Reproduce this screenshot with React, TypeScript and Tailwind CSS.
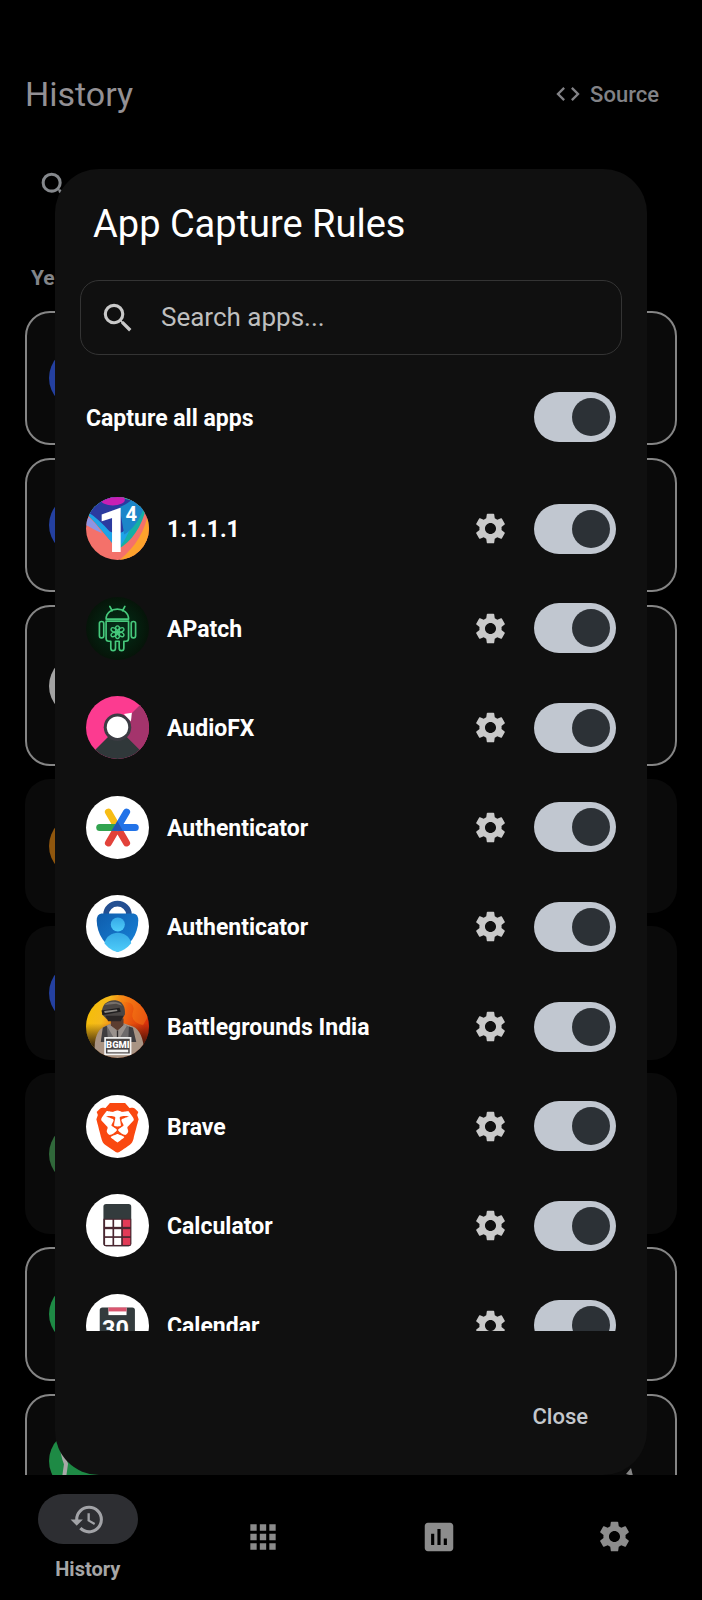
import { useState } from "react";
import type { ReactNode } from "react";
import { MdApps, MdAssessment, MdCode, MdHistory, MdSearch, MdSettings } from "react-icons/md";
import { SiBrave } from "react-icons/si";

// All app icons share a 188 unit square with a round mask
function AppIcon({ id, children }: { id: string; children: ReactNode }) {
  return (
    <svg viewBox="0 0 188 188" className="size-[63px] shrink-0" aria-hidden="true">
      <clipPath id={`${id}-clip`}>
        <circle cx="94" cy="94" r="94" />
      </clipPath>
      <g clipPath={`url(#${id}-clip)`}>{children}</g>
    </svg>
  );
}

function OneIcon() {
  return (
    <AppIcon id="one">
      <rect width="188" height="188" fill="#f4716a" />
      <path d="M188 36C178 100 148 150 100 188H188Z" fill="#fda22c" />
      <path d="M0 48C30 78 60 116 94 156C138 134 168 84 180 30L150 0H0Z" fill="#16b0a4" />
      <path d="M0 48C30 78 60 116 94 156C120 130 140 86 150 20L94 0H0Z" fill="#1ea3e6" />
      <path d="M0 56C20 68 34 84 48 108L30 100C16 92 8 86 0 84Z" fill="#8d95e4" />
      <path d="M4 44C30 60 50 80 70 102C82 110 106 110 114 100C134 76 146 50 150 14L94 0H30Z" fill="#2b3a9f" />
      <path d="M100 30C116 24 134 14 142 0L172 34C158 70 140 96 114 112Z" fill="#1b86c9" />
      <ellipse cx="80" cy="8" rx="36" ry="17" fill="#c81fb4" />
      <text x="32" y="165" fontFamily="Roboto" fontWeight="700" fontSize="182" fill="#fff">1</text>
      <text x="118" y="72" fontFamily="Roboto" fontWeight="700" fontSize="60" fill="#fff">4</text>
    </AppIcon>
  );
}

function APatchIcon() {
  return (
    <AppIcon id="apatch">
      <radialGradient id="apatch-bg">
        <stop offset="0" stopColor="#06301a" />
        <stop offset="0.6" stopColor="#04200f" />
        <stop offset="1" stopColor="#061409" />
      </radialGradient>
      <rect width="188" height="188" fill="url(#apatch-bg)" />
      <g fill="none" stroke="#46c97c" strokeWidth="5" strokeLinecap="round" strokeLinejoin="round">
        <path d="M60 66C60 26 127 26 127 66Z" />
        <path d="M71 28L78 41M116 28L109 41" />
        <path d="M60 72H127V124Q127 132 119 132H113V152Q113 160 106 160Q99 160 99 152V132H88V152Q88 160 81 160Q74 160 74 152V132H68Q60 132 60 124Z" />
        <rect x="40" y="73" width="13" height="49" rx="6" />
        <rect x="135" y="73" width="13" height="49" rx="6" />
        <g strokeWidth="4">
          <ellipse cx="94" cy="95" rx="6" ry="9" />
          <ellipse cx="94" cy="115" rx="6" ry="9" />
          <ellipse cx="84" cy="99" rx="6" ry="10" transform="rotate(-60 84 99)" />
          <ellipse cx="104" cy="99" rx="6" ry="10" transform="rotate(60 104 99)" />
          <ellipse cx="84" cy="111" rx="6" ry="10" transform="rotate(60 84 111)" />
          <ellipse cx="104" cy="111" rx="6" ry="10" transform="rotate(-60 104 111)" />
        </g>
      </g>
    </AppIcon>
  );
}

function AudioFxIcon() {
  return (
    <AppIcon id="audiofx">
      <rect width="188" height="188" fill="#fc3b90" />
      <path d="M94 94L188 0V188Z" fill="#a4346c" />
      <path d="M94 94L188 188H0Z" fill="#30383a" />
      <circle cx="94" cy="93" r="41" fill="#3b3c43" />
      <path d="M113 54L137 50L134 76Z" fill="#fff" />
      <circle cx="94" cy="93" r="32" fill="#fff" />
    </AppIcon>
  );
}

function GoogleAuthIcon() {
  return (
    <AppIcon id="gauth">
      <rect width="188" height="188" fill="#fff" />
      <g strokeWidth="21" strokeLinecap="round">
        <path d="M94 94L67 140M94 94L121 140" stroke="#e2423a" />
        <path d="M94 94L67 48" stroke="#f7bd15" />
        <path d="M94 94H41" stroke="#32a350" />
        <path d="M94 94H147M94 94L121 48" stroke="#2273e8" />
      </g>
      <path d="M76 104L94 75L110 104Z" fill="#2356b4" />
    </AppIcon>
  );
}

function MsAuthIcon() {
  return (
    <AppIcon id="msauth">
      <linearGradient id="msauth-body" x2="1" y2="1">
        <stop offset="0" stopColor="#0f5cab" />
        <stop offset="1" stopColor="#1785dc" />
      </linearGradient>
      <linearGradient id="msauth-user" x2="0" y2="1">
        <stop offset="0" stopColor="#35a9e6" />
        <stop offset="1" stopColor="#4fcdfa" />
      </linearGradient>
      <rect width="188" height="188" fill="#fff" />
      <path d="M60 64V58A34 32 0 0 1 128 58V64" fill="none" stroke="#234f91" strokeWidth="17" />
      <path d="M46 55H142Q156 57 156 76C156 116 130 154 94 170C58 154 32 116 32 76Q32 57 46 55Z" fill="url(#msauth-body)" />
      <circle cx="95" cy="88" r="21" fill="url(#msauth-user)" />
      <path d="M55 144C64 102 126 102 135 144C122 160 108 168 95 170C80 168 66 158 55 144Z" fill="url(#msauth-user)" />
    </AppIcon>
  );
}

function BgmiIcon() {
  return (
    <AppIcon id="bgmi">
      <linearGradient id="bgmi-bg" x2="1" y2="0.35">
        <stop offset="0" stopColor="#f6c000" />
        <stop offset="0.35" stopColor="#f5b91c" />
        <stop offset="0.65" stopColor="#f1640f" />
        <stop offset="1" stopColor="#d8300b" />
      </linearGradient>
      <linearGradient id="bgmi-shade" x2="0" y2="1">
        <stop offset="0.45" stopColor="#1a0a04" stopOpacity="0" />
        <stop offset="0.85" stopColor="#1a0f0a" stopOpacity="0.95" />
      </linearGradient>
      <rect width="188" height="188" fill="url(#bgmi-bg)" />
      <path d="M110 20Q150 20 140 50T170 90L188 60V0H100Z" fill="#f98a1a" opacity="0.4" />
      <rect width="188" height="188" fill="url(#bgmi-shade)" />
      <path d="M26 170C24 130 34 104 52 96L76 84H112L140 94C160 102 172 130 174 170L140 188H60Z" fill="#a99484" />
      <path d="M74 70H112V92L94 106L74 92Z" fill="#5c3d30" />
      <path d="M52 96L70 88L94 108L114 88L136 98L142 140H46Z" fill="#6d6a6b" />
      <path d="M70 88L94 108L114 88L122 92L100 130H84L62 92Z" fill="#99918d" />
      <path d="M50 98L62 92L66 140H44ZM128 94L140 98L150 140H126Z" fill="#3f3d40" />
      <path d="M94 106V130" stroke="#2c292b" strokeWidth="4" />
      <path d="M20 160L60 188H130L176 150V188H20Z" fill="#1c1818" />
      <path d="M48 58C44 28 66 14 88 16C108 18 118 34 116 58L108 72H62Z" fill="#4b4644" />
      <path d="M56 30C66 18 98 16 108 32L90 26Z" fill="#77706b" />
      <path d="M46 46L100 38L104 50L50 60Z" fill="#1f1d1e" />
      <path d="M54 48L92 43L94 48L56 54Z" fill="#8b8782" />
      <path d="M58 62H112L104 78H66Z" fill="#2b2626" />
      <rect x="57" y="128" width="76" height="49" fill="#4a4646" stroke="#f4f4f4" strokeWidth="5" />
      <text x="95" y="158" textAnchor="middle" fontFamily="Roboto" fontWeight="900" fontSize="28" fill="#fff">BGMI</text>
      <rect x="64" y="163" width="62" height="8" fill="#f4f4f4" />
    </AppIcon>
  );
}

function BraveIcon() {
  return (
    <AppIcon id="brave">
      <rect width="188" height="188" fill="#fff" />
      <SiBrave x="20" y="24" size={148} color="#fa4810" />
    </AppIcon>
  );
}

function CalculatorIcon() {
  return (
    <AppIcon id="calculator">
      <rect width="188" height="188" fill="#fff" />
      <rect x="52" y="30" width="83" height="126" rx="8" fill="#333b3d" />
      <path d="M52 74H135V148Q135 156 127 156H60Q52 156 52 148Z" fill="#4a2630" />
      {[77, 105, 131].map((y) => (
        <g key={y}>
          <rect x="57" y={y} width="22" height="21" fill="#fff" />
          <rect x="84" y={y} width="21" height="21" fill="#fff" />
          <rect x="110" y={y} width="22" height="21" fill="#e23a57" />
        </g>
      ))}
    </AppIcon>
  );
}

function CalendarIcon() {
  return (
    <AppIcon id="calendar">
      <rect width="188" height="188" fill="#fff" />
      <rect x="41" y="40" width="105" height="110" rx="8" fill="#333b3d" />
      <rect x="67" y="40" width="54" height="23" fill="#fff" />
      <rect x="67" y="40" width="54" height="12" fill="#d9566f" />
      <text x="88" y="127" textAnchor="middle" fontFamily="Roboto" fontWeight="700" fontSize="70" fill="#fff">30</text>
    </AppIcon>
  );
}

const apps = [
  { id: "one", name: "1.1.1.1", Icon: OneIcon },
  { id: "apatch", name: "APatch", Icon: APatchIcon },
  { id: "audiofx", name: "AudioFX", Icon: AudioFxIcon },
  { id: "gauth", name: "Authenticator", Icon: GoogleAuthIcon },
  { id: "msauth", name: "Authenticator", Icon: MsAuthIcon },
  { id: "bgmi", name: "Battlegrounds India", Icon: BgmiIcon },
  { id: "brave", name: "Brave", Icon: BraveIcon },
  { id: "calculator", name: "Calculator", Icon: CalculatorIcon },
  { id: "calendar", name: "Calendar", Icon: CalendarIcon },
];

const outlined = "border-2 border-[#858585]";
const plain = "border-2 border-transparent";
const historyCards = [
  { size: "h-[134px]", frame: outlined, dot: "bg-[#2440a0]" },
  { size: "h-[134px]", frame: outlined, dot: "bg-[#2440a0]" },
  { size: "h-[161px]", frame: outlined, dot: "bg-[#a3a3a3]" },
  { size: "h-[134px]", frame: plain, dot: "bg-[#8f560d]" },
  { size: "h-[134px]", frame: plain, dot: "bg-[#2440a0]" },
  { size: "h-[161px]", frame: plain, dot: "bg-[#30683a]" },
  { size: "h-[134px]", frame: outlined, dot: "bg-[#1e8a45]" },
];

function Toggle({ id, checked, onChange }: { id: string; checked: boolean; onChange: () => void }) {
  return (
    <input
      id={id}
      type="checkbox"
      role="switch"
      checked={checked}
      onChange={onChange}
      className="flex h-[50px] w-[82px] shrink-0 cursor-pointer appearance-none items-center rounded-full bg-[#44474c] px-[6px] transition-colors before:size-[38px] before:rounded-full before:bg-[#8d9198] checked:justify-end checked:bg-[#c1c7d0] checked:before:bg-[#2c3136]"
    />
  );
}

function HistoryPage() {
  return (
    <main className="flex min-h-0 flex-1 flex-col overflow-hidden px-[25px] pt-[69px]">
      <header className="flex h-[50px] items-center justify-between pr-[18px]">
        <h1 className="text-[34px] text-[#939094]">History</h1>
        <a href="#source" className="flex items-center gap-2 text-[22px] font-medium text-[#828286]">
          <MdCode size={28} />
          Source
        </a>
      </header>
      <div className="mt-[48px] flex h-[38px] shrink-0 items-center px-3 text-[#85888c]">
        <MdSearch size={37} />
      </div>
      <h2 className="mt-[58px] px-[6px] text-[21px] leading-[30px] font-bold text-[#828589]">Yesterday</h2>
      <div className="mt-[18px] flex flex-col gap-[13px]">
        {historyCards.map((card, i) => (
          <div key={i} className={`flex shrink-0 items-center rounded-[25px] bg-[#0a0a0a] px-[22px] ${card.size} ${card.frame}`}>
            <span className={`size-[62px] rounded-full ${card.dot}`} />
          </div>
        ))}
        <div className={`flex h-[134px] shrink-0 items-center justify-between rounded-[25px] bg-[#0a0a0a] px-[22px] ${outlined}`}>
          <svg viewBox="0 0 62 62" className="size-[62px]" aria-hidden="true">
            <circle cx="31" cy="31" r="31" fill="#1e8a45" />
            <path d="M13 14Q13 24 17 34L15 48" fill="none" stroke="#a8a8a8" strokeWidth="4" />
          </svg>
          <svg viewBox="0 0 24 24" className="mr-4 mb-[46px] size-3 self-end" aria-hidden="true">
            <path d="M2 12L12 0L18 24L12 15Z" fill="#858585" />
          </svg>
        </div>
      </div>
    </main>
  );
}

function BottomNav() {
  return (
    <nav className="grid h-[125px] shrink-0 grid-cols-4 bg-black text-[#8c8c8c]">
      <button className="flex flex-col items-center pt-[19px]">
        <span className="flex h-[50px] w-[100px] items-center justify-center rounded-full bg-[#2d2e32] text-[#a2a3a7]">
          <MdHistory size={37} />
        </span>
        <span className="mt-[10px] text-[20px] leading-[30px] font-bold text-[#a6a6a6]">History</span>
      </button>
      <button aria-label="Apps" className="flex items-center justify-center pb-0.5">
        <MdApps size={38} />
      </button>
      <button aria-label="Statistics" className="flex items-center justify-center pb-0.5">
        <MdAssessment size={38} />
      </button>
      <button aria-label="Settings" className="flex items-center justify-center pb-0.5">
        <MdSettings size={37} />
      </button>
    </nav>
  );
}

function CaptureRulesDialog() {
  const [captureAll, setCaptureAll] = useState(true);
  const [disabled, setDisabled] = useState<string[]>([]);
  const [query, setQuery] = useState("");

  const toggleApp = (id: string) =>
    setDisabled((prev) => (prev.includes(id) ? prev.filter((x) => x !== id) : [...prev, id]));

  const visible = apps.filter((app) => app.name.toLowerCase().includes(query.toLowerCase()));

  return (
    <div
      role="dialog"
      aria-labelledby="rules-title"
      className="absolute inset-x-[55px] top-[169px] bottom-[125px] flex flex-col rounded-[44px] bg-[#101010] px-[25px]"
    >
      <h2 id="rules-title" className="px-[13px] pt-[30px] text-[38px] leading-[50px] text-white">
        App Capture Rules
      </h2>
      <label className="mt-[31px] flex h-[75px] shrink-0 items-center gap-6 rounded-[19px] border border-[#343434] px-[18px] text-[#c9c9c9]">
        <MdSearch size={38} className="shrink-0" />
        <input
          type="text"
          aria-label="Search apps"
          placeholder="Search apps..."
          value={query}
          onChange={(e) => setQuery(e.target.value)}
          className="min-w-0 flex-1 bg-transparent text-[26px] outline-none placeholder:text-[#bfbfbf]"
        />
      </label>
      <div className="mt-[37px] flex items-center justify-between px-[6px]">
        <label htmlFor="capture-all" className="pt-[3px] text-[23px] leading-[34px] font-bold text-white">
          Capture all apps
        </label>
        <Toggle id="capture-all" checked={captureAll} onChange={() => setCaptureAll(!captureAll)} />
      </div>
      <div className="mt-[37px] min-h-0 flex-1 overflow-hidden px-[6px]">
        <ul className="grid h-[896px] grid-rows-9">
          {visible.map(({ id, name, Icon }) => (
            <li key={id} className="flex items-center">
              <Icon />
              <label htmlFor={id} className="ml-[18px] flex-1 pt-[3px] text-[23px] leading-[34px] font-bold text-white">
                {name}
              </label>
              <button aria-label={`${name} settings`} className="mr-[25px] text-[#cacaca]">
                <MdSettings size={37} />
              </button>
              <Toggle id={id} checked={captureAll && !disabled.includes(id)} onChange={() => toggleApp(id)} />
            </li>
          ))}
        </ul>
      </div>
      <footer className="flex h-[144px] shrink-0 items-center justify-end px-[34px] pt-[26px]">
        <button className="text-[22px] font-medium text-[#c4c7cc]">Close</button>
      </footer>
    </div>
  );
}

export default function App() {
  return (
    <div className="relative flex h-screen min-h-[640px] flex-col overflow-hidden bg-black font-['Roboto',sans-serif]">
      <HistoryPage />
      <BottomNav />
      <CaptureRulesDialog />
    </div>
  );
}
